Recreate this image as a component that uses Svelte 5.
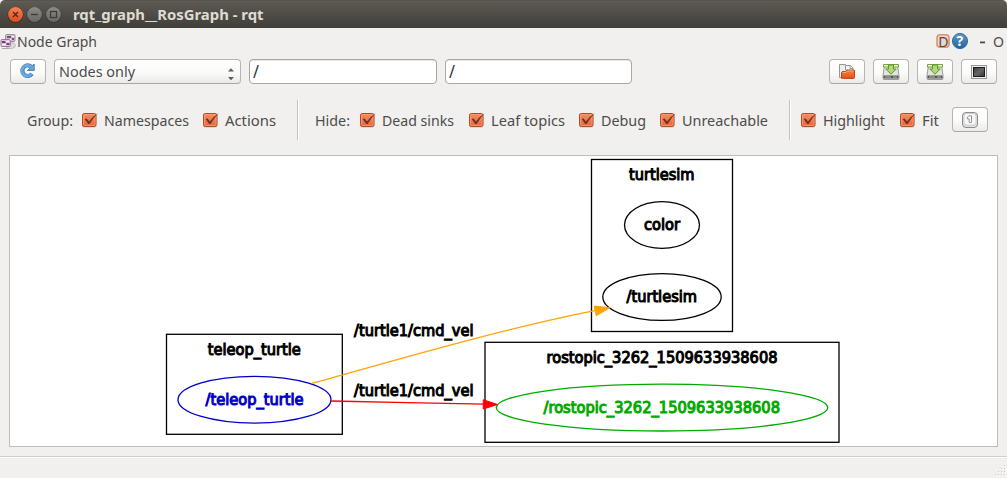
<script>
  const hideFilters = [
    { label: 'Dead sinks', width: 72, box: 87 },
    { label: 'Leaf topics', width: 74, box: 88 },
    { label: 'Debug', width: 45, box: 59 },
    { label: 'Unreachable', width: 86, box: 86 }
  ];
  const groupFilters = [
    { label: 'Namespaces', width: 85, box: 99.5 },
    { label: 'Actions', width: 51, box: 51 }
  ];
  const viewFilters = [
    { label: 'Highlight', width: 62, box: 77 },
    { label: 'Fit', width: 17, box: 17 }
  ];
  const clusters = [
    { x: 591.5, y: 159.5, w: 141, h: 172, label: 'turtlesim', tx: 629, ty: 179.8, tw: 65.5 },
    { x: 166.5, y: 334.3, w: 175.8, h: 100, label: 'teleop_turtle', tx: 207.8, ty: 354.5, tw: 93 },
    { x: 485, y: 342.3, w: 354, h: 100, label: 'rostopic_3262_1509633938608', tx: 546.5, ty: 362.5, tw: 231 }
  ];
  const nodes = [
    { cx: 662, cy: 225, rx: 37.5, ry: 23.4, color: '#000', label: 'color', tx: 644, ty: 230, tw: 36 },
    { cx: 662, cy: 297, rx: 59.2, ry: 23.4, color: '#000', label: '/turtlesim', tx: 626.5, ty: 302, tw: 70.5 },
    { cx: 254.5, cy: 399.7, rx: 76.5, ry: 23.4, color: '#0000c8', label: '/teleop_turtle', tx: 205.5, ty: 404.5, tw: 98 },
    { cx: 662, cy: 407.6, rx: 165.8, ry: 23.4, color: '#00aa00', label: '/rostopic_3262_1509633938608', tx: 543.5, ty: 412.5, tw: 236.5 }
  ];
</script>

{#snippet text(label, width)}
  <svg class="label" width={width} height="20"><text x="0" y="15" textLength={width} lengthAdjust="spacingAndGlyphs">{label}</text></svg>
{/snippet}

{#snippet check(f)}
  <label class="check" style:width="{f.box + 22}px">
    <svg width="17" height="17" viewBox="0 0 17 17">
      <rect x="0" y="2" width="14.5" height="13.8" rx="2" fill="#d5d1ce" />
      <rect x="0.5" y="1.5" width="13.5" height="13" rx="1.8" fill="url(#orange)" stroke="#ad4b2b" />
      <rect x="1.5" y="2.5" width="11.5" height="11" rx="1" fill="none" stroke="#ffa47c" stroke-opacity=".65" />
      <path d="M2.6 7 L4.6 6.6 L7 9.4 Q10.3 4.5 15.8 1.2 Q10.8 6 7.6 12 H6.3 Z" fill="#633629" />
    </svg>
    {@render text(f.label, f.width)}
  </label>
{/snippet}

{#snippet drive()}
  <svg width="18" height="18" viewBox="0 0 18 18">
    <path d="M2.5 2.5 H15.5 L17 12.5 V15.5 Q17 16.5 16 16.5 H2 Q1 16.5 1 15.5 V12.5 Z" fill="#e3e3e0" stroke="#999b97" />
    <path d="M1.5 12.5 H16.5 V15.5 H1.5 Z" fill="#555854" />
    <path d="M3 14 H9 M11 14 H15" stroke="#b7bab4" stroke-width="1" />
    <path d="M1.5 1.5 H16.5 V4 H1.5 Z" fill="#edf6dc" stroke="#75a33b" />
    <path d="M6.5 2 H11.5 V6 H14.2 L9 11.2 L3.8 6 H6.5 Z" fill="#b2d879" stroke="#609726" />
  </svg>
{/snippet}

<div class="window">
  <header class="titlebar">
    <svg class="controls" width="54" height="20" viewBox="0 0 54 20">
      <circle cx="8.5" cy="11" r="8" fill="#35342f" />
      <circle cx="8.5" cy="10.5" r="7.4" fill="url(#close)" />
      <path d="M6 8 L11 13 M11 8 L6 13" stroke="#4b2a1d" stroke-width="1.3" />
      <circle cx="27.5" cy="11" r="8" fill="#393833" />
      <circle cx="27.5" cy="10.5" r="7.4" fill="url(#gray)" />
      <path d="M24 10.5 H31" stroke="#3c3b37" stroke-width="1.3" />
      <circle cx="46.5" cy="11" r="8" fill="#393833" />
      <circle cx="46.5" cy="10.5" r="7.4" fill="url(#gray)" />
      <rect x="43.5" y="7.5" width="6" height="6" fill="none" stroke="#3c3b37" stroke-width="1.2" />
    </svg>
    <svg class="title" width="194" height="22"><text x="0" y="16" textLength="190.5" lengthAdjust="spacingAndGlyphs">rqt_graph__RosGraph - rqt</text></svg>
  </header>

  <div class="dock">
    <svg width="17" height="18" viewBox="0 0 17 18">
      <rect x="5.5" y="1.5" width="9.5" height="7" rx="1" fill="#cdbdcd" stroke="#a18fa1" />
      <path d="M7 3 H11 V5 H7 Z M12 5 H14 V7 H12 Z" fill="#88458a" />
      <path d="M12 3 H14 V4 H12 Z M7 6 H11 V7 H7 Z" fill="#fff" />
      <ellipse cx="10.5" cy="12.5" rx="5" ry="3" fill="#dddbda" stroke="#bdbab9" />
      <rect x="1" y="6.5" width="9.3" height="7" rx="1" fill="#dccbdc" stroke="#927d92" />
      <path d="M2 8 H5.5 V10 H2 Z M6.5 10 H9.5 V12 H6.5 Z" fill="#85358a" />
      <path d="M6.5 8 H9 V9 H6.5 Z M2.5 11 H5.5 V12.5 H2.5 Z" fill="#fff" />
      <path d="M2 15.5 H9" stroke="#aaa" />
    </svg>
    {@render text('Node Graph', 80)}
    <div class="dock-actions">
      <svg class="badges" width="33" height="20" viewBox="0 0 33 20">
        <rect x="1" y="2.7" width="12" height="12.5" rx="3" fill="#f1d4c6" stroke="#e2916f" stroke-width="1.6" />
        <text x="2.2" y="14.5" class="d">D</text>
        <circle cx="24" cy="9" r="7.6" fill="url(#blue)" stroke="#28659a" stroke-width=".9" />
        <text x="20.6" y="14" class="help">?</text>
      </svg>
      <svg class="dash" width="6" height="18"><rect x="0" y="9.5" width="5" height="1.8" fill="#4c4c4c" /></svg>
      <svg class="float" width="14" height="20"><text x="0" y="15" textLength="11" lengthAdjust="spacingAndGlyphs">O</text></svg>
    </div>
  </div>

  <div class="toolbar">
    <button class="button" aria-label="Refresh">
      <svg class="refresh" width="18" height="18" viewBox="0 0 18 18">
        <path d="M13.3 4.8 A5.3 5.3 0 1 0 14 11.8" fill="none" stroke="#4a82bd" stroke-width="4.2" />
        <path d="M16.2 2 V8.5 H9.3 Z" fill="#6ba4dc" stroke="#4a82bd" stroke-width="1" />
        <path d="M13.2 5.1 A5.3 5.3 0 1 0 13.5 11.7" fill="none" stroke="#6fa8de" stroke-width="2.8" />
      </svg>
    </button>
    <div class="combo">
      {@render text('Nodes only', 76)}
      <svg class="arrows" width="8" height="14" viewBox="0 0 8 14"><path d="M1 4.5 L4 1.2 L7 4.5 Z M1 10 L4 13.3 L7 10 Z" fill="#5d5d5b" /></svg>
    </div>
    <div class="field">{@render text('/', 6)}</div>
    <div class="field second">{@render text('/', 6)}</div>
    <div class="tools">
      <button class="button" aria-label="Open">
        <svg width="18" height="18" viewBox="0 0 18 18">
          <path d="M1.5 14.5 V1.5 H7.5 L9.5 3.5 V14.5 Z" fill="#eee" stroke="#969696" />
          <path d="M7.5 7 V2.5 H12.5 L15 5 V8 Z" fill="#fafafa" stroke="#999" />
          <path d="M12 2.5 V5.5 H15" fill="none" stroke="#999" />
          <path d="M3.5 15.3 V10 Q3.5 8.5 5 8.5 H7.5 L9 7 H16 Q16.5 7 16.5 8 V14.5 Q16.5 15.5 15.5 15.5 Z" fill="url(#folder)" stroke="#bd4518" />
          <path d="M4.5 9.5 H8 L9.5 8 H15.5" fill="none" stroke="#ffa775" />
        </svg>
      </button>
      <button class="button" aria-label="Save dot">{@render drive()}</button>
      <button class="button" aria-label="Save image">{@render drive()}</button>
      <button class="button" aria-label="Screen">
        <svg width="18" height="18" viewBox="0 0 18 18">
          <rect x="1.5" y="2.5" width="15" height="13" fill="#f0f0ef" stroke="#969694" />
          <rect x="3.5" y="4.5" width="11" height="9" fill="url(#screen)" stroke="#1d1d1d" />
        </svg>
      </button>
    </div>
  </div>

  <div class="filters">
    <div class="group first">
      <span class="caption group-caption">{@render text('Group:', 46)}</span>
      {#each groupFilters as f}{@render check(f)}{/each}
    </div>
    <div class="group hide">
      <span class="caption hide-caption">{@render text('Hide:', 35)}</span>
      {#each hideFilters as f}{@render check(f)}{/each}
    </div>
    <div class="group view">
      {#each viewFilters as f}{@render check(f)}{/each}
      <button class="button fit" aria-label="Fit in view">
        <svg width="18" height="18" viewBox="0 0 18 18">
          <rect x="1.5" y="1.5" width="15" height="15" rx="3.5" fill="#dfdfde" stroke="#8c8c8b" />
          <rect x="3" y="2.5" width="12" height="11.5" rx="2.5" fill="#f8f8f8" stroke="#d0d0cf" />
          <path d="M6.4 6 L8 4.8 H10.5 V11.5 H8.2 V8 H6.4 Z" fill="#fff" stroke="#8a8a89" stroke-width=".9" />
        </svg>
      </button>
    </div>
  </div>

  <main class="canvas">
    <svg width="987" height="290" viewBox="10 156 987 290">
      {#each clusters as c}
        <rect x={c.x} y={c.y} width={c.w} height={c.h} fill="none" stroke="#000" stroke-width="1.3" />
        <text class="node" x={c.tx} y={c.ty} textLength={c.tw} lengthAdjust="spacingAndGlyphs">{c.label}</text>
      {/each}
      {#each nodes as n}
        <g style:color={n.color}>
          <ellipse cx={n.cx} cy={n.cy} rx={n.rx} ry={n.ry} fill="none" stroke="currentColor" stroke-width="1.3" />
          <text class="node" x={n.tx} y={n.ty} textLength={n.tw} lengthAdjust="spacingAndGlyphs">{n.label}</text>
        </g>
      {/each}
      <path d="M311.5 383.5 C375 366 500 329 596 310.3" fill="none" stroke="#ffa500" stroke-width="1.3" />
      <path d="M594.3 306 L609.8 307.8 L596.2 315.8 Z" fill="#ffa500" stroke="#ffa500" />
      <path d="M331 401 C380 402 435 403 484 404.2" fill="none" stroke="#f00" stroke-width="1.3" />
      <path d="M483.3 399.7 L497.5 404.5 L483.2 409 Z" fill="#f00" stroke="#f00" />
      <text class="node" x="354" y="336" textLength="119.5" lengthAdjust="spacingAndGlyphs">/turtle1/cmd_vel</text>
      <text class="node" x="354" y="396" textLength="119.5" lengthAdjust="spacingAndGlyphs">/turtle1/cmd_vel</text>
    </svg>
  </main>

  <footer class="status">
    <svg width="11" height="12" viewBox="0 0 11 12">
      {#each [[9, 0], [6, 3], [9, 3], [3, 6], [6, 6], [9, 6], [0, 9], [3, 9], [6, 9], [9, 9]] as [x, y]}
        <rect x={x + 1} y={y + 1} width="1" height="1" fill="#fff" /><rect {x} {y} width="1" height="1" fill="#cac7c3" />
      {/each}
    </svg>
  </footer>

  <svg class="defs" width="0" height="0">
    <defs>
      <linearGradient id="orange" x2="0" y2="1"><stop stop-color="#fb8c60" /><stop offset="1" stop-color="#e96539" /></linearGradient>
      <linearGradient id="close" x2="0" y2="1"><stop stop-color="#f58159" /><stop offset="1" stop-color="#df4c1b" /></linearGradient>
      <linearGradient id="gray" x2="0" y2="1"><stop stop-color="#8c8b85" /><stop offset="1" stop-color="#686761" /></linearGradient>
      <linearGradient id="blue" x2="0" y2="1"><stop stop-color="#6199cb" /><stop offset="1" stop-color="#24639f" /></linearGradient>
      <linearGradient id="folder" x2="0" y2="1"><stop stop-color="#fa8044" /><stop offset="1" stop-color="#e54f16" /></linearGradient>
      <linearGradient id="screen" x2="1" y2="1"><stop stop-color="#3b3b3b" /><stop offset=".5" stop-color="#666" /><stop offset="1" stop-color="#333" /></linearGradient>
    </defs>
  </svg>
</div>

<style>
  :global(body) { margin: 0; background: #f1f0ee; }
  .window { width: 1007px; height: 478px; display: flex; flex-direction: column; overflow: hidden; background: #f1f0ee; font: 15px "Noto Sans", sans-serif; color: #000; }
  svg { display: block; flex: none; overflow: visible; }
  text { fill: #4c4c4c; }
  .titlebar { height: 28px; flex: none; display: flex; box-sizing: border-box; padding: 4px 0 0 7px; background: linear-gradient(#4b4944 0, #605d55 1px, #5b5850 3px, #3f3e39 28px); border-radius: 5px 5px 0 0; }
  .titlebar .title { margin-left: 12px; }
  .title text { fill: #dfdbd2; font-weight: 700; font-size: 15px; }
  .dock { height: 31px; flex: none; display: flex; box-sizing: border-box; padding-top: 4px; }
  .dock > svg:first-child { margin-top: 1px; }
  .dock-actions { margin-left: auto; display: flex; }
  .d { font: 14px "Noto Sans", sans-serif; }
  .help { font: 700 14px "Noto Sans", sans-serif; fill: #fff; }
  .dash { margin: 0 7px 0 12px; }
  .toolbar { display: flex; padding: 0 10px; height: 25px; flex: none; }
  .button { box-sizing: border-box; width: 36px; height: 25px; padding: 0; border: 1px solid #b8b4b0; border-bottom-color: #aaa6a2; border-radius: 4px; background: linear-gradient(#fff, #fbfbfa 55%, #ebeae8); display: flex; align-items: center; justify-content: center; }
  .refresh { margin: -1px 2px 0 0; }
  .combo { box-sizing: border-box; width: 187px; height: 25px; margin: 0 8px; padding: 1px 5px 0 4px; border: 1px solid #b8b4b0; border-bottom-color: #aaa6a2; border-radius: 4px; background: linear-gradient(#fff, #fafaf9 55%, #ebeae8); display: flex; justify-content: space-between; align-items: center; }
  .arrows { margin-top: 3px; }
  .field { box-sizing: border-box; width: 188px; height: 25px; margin-right: 8px; padding: 3px 3px 0; border: 1px solid #aaa6a1; border-radius: 4px; background: #fff; box-shadow: inset 0 1px #e8e7e5; }
  .second { width: 187px; }
  .field text { fill: #333; font-size: 18px; }
  .tools { display: flex; gap: 8px; margin-left: auto; }
  .filters { display: flex; height: 40px; margin-top: 16px; flex: none; }
  .group { display: flex; align-items: center; box-sizing: border-box; height: 40px; }
  .first { width: 297px; padding-left: 27px; }
  .hide, .view { border-left: 1px solid #c4c1be; box-shadow: inset 1px 0 #fff; }
  .hide { width: 492px; padding-left: 17px; }
  .view { padding-left: 11px; }
  .caption { flex: none; padding-top: 1px; }
  .group-caption { width: 54.5px; }
  .hide-caption { width: 44.5px; }
  .check { display: flex; align-items: center; flex: none; gap: 5px; }
  .check .label { margin-top: 1px; }
  .check :global(svg:last-child) { margin-top: 1px; }
  .fit { margin: -1px 0 0 13px; }
  .canvas { box-sizing: border-box; width: 989px; height: 292px; flex: none; margin: 15px 0 0 9px; background: #fff; border: 1px solid #bfbdb9; }
  .node { font: 15px "DejaVu Sans", sans-serif; stroke-width: 1.05; fill: currentColor; stroke: currentColor; }
  .status { margin-top: 9px; height: 22px; border-top: 1px solid #d0cecb; box-shadow: inset 0 1px #fff; display: flex; justify-content: flex-end; align-items: flex-end; }
  .status svg { margin: 0 1px 1px 0; }
  .badges { position: relative; left: 1px; }
  .defs { position: absolute; }
</style>
